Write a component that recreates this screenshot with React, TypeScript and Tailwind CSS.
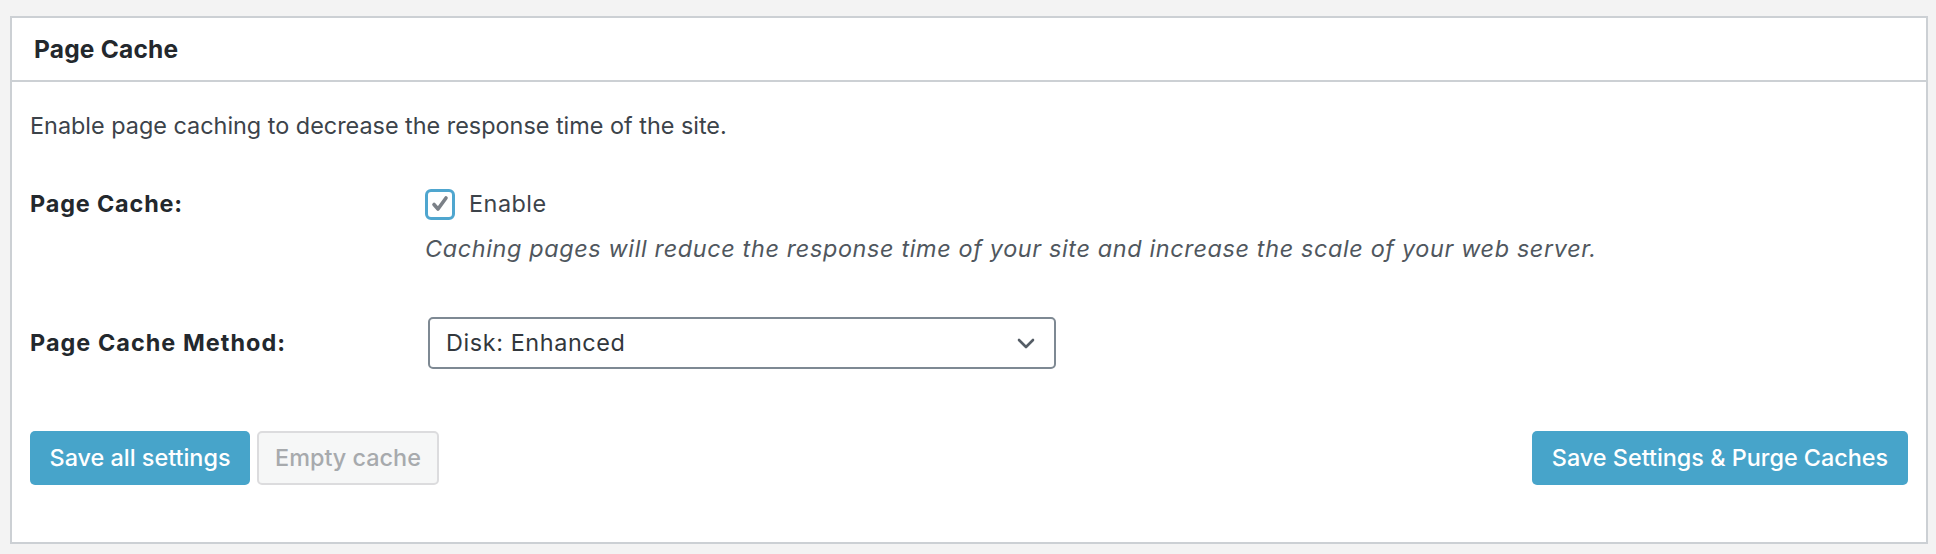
export default function App() {
  return (
    <div className="min-h-[554px] w-full bg-[#f3f3f3] pt-4 pl-[10px] pr-2 font-['Inter',_'Noto_Sans',_sans-serif] text-[#23282d]">
      <div className="h-[528px] border-2 border-[#ccd0d4] bg-white">
        {/* header */}
        <div className="flex h-[64px] items-center border-b-2 border-[#ccd0d4] pl-[22px]">
          <h3 className="text-[24.5px] font-bold tracking-[0.2px]">Page Cache</h3>
        </div>

        <div className="px-[18px]">
          <p className="mt-[28px] text-[23.4px] leading-[32px] text-[#3c434a]">
            Enable page caching to decrease the response time of the site.
          </p>

          {/* page cache row */}
          <div className="mt-[46px] flex">
            <div className="w-[395px] text-[23.4px] font-bold leading-[32px] tracking-[0.85px]">Page Cache:</div>
            <div className="flex flex-col">
              <label className="flex items-center gap-[14px] text-[23.4px] leading-[32px] tracking-[0.5px] text-[#3c434a]">
                <span className="flex h-[31px] w-[30px] items-center justify-center rounded-[6px] border-[3px] border-[#4fa6cf] bg-white">
                  <svg viewBox="0 0 20 20" className="h-[20px] w-[20px]">
                    <path d="M4 10.5l4 4.5 8-11" fill="none" stroke="#7b8087" strokeWidth="3.6" strokeLinecap="round" strokeLinejoin="round" />
                  </svg>
                </span>
                Enable
              </label>
              <p className="mt-[13px] text-[23.4px] italic leading-[32px] tracking-[0.65px] text-[#50575e]">
                Caching pages will reduce the response time of your site and increase the scale of your web server.
              </p>
            </div>
          </div>

          {/* method row */}
          <div className="mt-[52px] flex items-center">
            <div className="w-[398px] text-[23.4px] font-bold leading-[32px] tracking-[1.05px]">Page Cache Method:</div>
            <div className="flex h-[52px] w-[628px] items-center justify-between rounded-[5px] border-2 border-[#7e8993] pl-[16px] pr-[18px] text-[23.4px] tracking-[0.6px] text-[#32373c]">
              <span>Disk: Enhanced</span>
              <svg viewBox="0 0 20 20" className="h-[20px] w-[20px]">
                <path d="M3 7l7 7 7-7" fill="none" stroke="#555d66" strokeWidth="2.6" strokeLinecap="round" strokeLinejoin="round" />
              </svg>
            </div>
          </div>

          {/* buttons */}
          <div className="mt-[62px] flex items-center justify-between">
            <div className="flex gap-[7px]">
              <button className="h-[54px] w-[220px] rounded-[5px] bg-[#47a4ca] text-[23.4px] font-medium text-white">
                Save all settings
              </button>
              <button className="h-[54px] w-[182px] rounded-[5px] border-2 border-[#dcdcde] bg-[#f6f7f7] text-[23.4px] font-medium text-[#a7aaad]">
                Empty cache
              </button>
            </div>
            <button className="h-[54px] w-[376px] rounded-[5px] bg-[#47a4ca] text-[23.4px] font-medium text-white">
              Save Settings &amp; Purge Caches
            </button>
          </div>
        </div>
      </div>
    </div>
  );
}
